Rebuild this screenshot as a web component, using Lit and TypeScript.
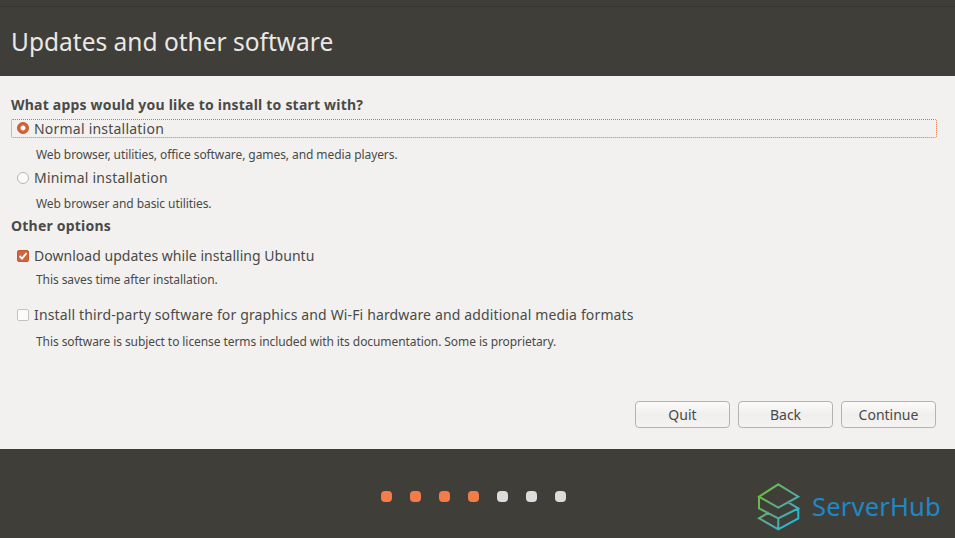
import { LitElement, html, css } from "lit";
import { customElement } from "lit/decorators.js";

@customElement("app-root")
export class AppRoot extends LitElement {
  static styles = css`
    :host { display: block; width: 955px; height: 538px; overflow: hidden; font-family: "Noto Sans", "Open Sans", sans-serif; color: #4a4a48; }
    .page { display: flex; flex-direction: column; height: 538px; }
    .header { height: 76px; box-sizing: border-box; background: #403e39; padding-top: 6px; }
    .header-inner { border-top: 1px solid #373531; height: 70px; box-sizing: border-box; padding: 17px 0 0 11px; }
    h1 { margin: 0; font-size: 24.5px; line-height: 36px; font-weight: 400; color: #e9e8e4; white-space: nowrap; }
    .main { flex: 1; background: #f2f1ef; display: flex; flex-direction: column; padding: 20px 18px 21px 11px; }
    .heading { height: 18px; line-height: 18px; font-size: 14px; font-weight: 700; color: #4a4a48; letter-spacing: 0.21px; white-space: nowrap; }
    .opt { height: 19px; line-height: 19px; font-size: 14px; display: flex; align-items: center; gap: 4px; padding-left: 6px; box-sizing: border-box; white-space: nowrap; }
    .focus { border: 1px dotted #e2703f; border-radius: 2px; padding-left: 5px; margin-top: 5px; }
    .desc { height: 18px; line-height: 18px; font-size: 12px; letter-spacing: -0.08px; padding-left: 25px; white-space: nowrap; }
    .radio { width: 12px; height: 12px; box-sizing: border-box; border-radius: 50%; border: 1px solid #b8b6b2; background: #fbfbfa; flex: none; margin-right: 1px; }
    .radio.on { background: radial-gradient(circle, #fff 0 1.6px, #f3d3c3 2.2px, #d2643a 3px, #cf5f34 6px); border-color: #c9582a; margin-bottom: 1px; }
    .box { width: 12px; height: 12px; box-sizing: border-box; border-radius: 2px; border: 1px solid #c4c2be; background: #fbfbfa; flex: none; margin: 1px 1px 0 0; }
    .box.on { background: #d2633a; border-color: #c25b35; }
    .box svg { width: 10px; height: 10px; display: block; }
    .ls-a { letter-spacing: 0.22px; } .ls-b { letter-spacing: 0.03px; } .ls-c { letter-spacing: 0.14px; }
    .m8 { margin-top: 8px; } .m4 { margin-top: 4px; } .m6 { margin-top: 6px; } .m9 { margin-top: 9px; } .m11 { margin-top: 11px; } .m16 { margin-top: 16px; }
    .buttons { margin-top: auto; display: flex; justify-content: flex-end; gap: 8px; padding-right: 1px; }
    button { width: 95px; height: 27px; padding: 0; border: 1px solid #b5b3af; border-radius: 4px; background: linear-gradient(#fbfbfa, #f0efed 50%, #f4f3f1); font: 14px "Noto Sans", sans-serif; color: #4a4a48; }
    .footer { height: 89px; background: #403e39; position: relative; display: flex; justify-content: center; gap: 18px; padding: 42px 9px 0 0; box-sizing: border-box; }
    .dot { width: 11px; height: 11px; border-radius: 4px; background: #dcdcdb; }
    .dot.on { background: #f47c48; }
    .logo { position: absolute; left: 755px; top: 32px; display: flex; align-items: center; gap: 9px; }
    .logo svg { display: block; }
    .brand { font-size: 25.6px; line-height: 28px; font-weight: 400; letter-spacing: 0.15px; color: #1f88c4; padding-bottom: 3px; }
  `;

  render() {
    return html`<div class="page">
      <div class="header"><div class="header-inner"><h1>Updates and other software</h1></div></div>
      <div class="main">
        <div class="heading">What apps would you like to install to start with?</div>
        <div class="opt focus ls-a"><span class="radio on"></span>Normal installation</div>
        <div class="desc m8">Web browser, utilities, office software, games, and media players.</div>
        <div class="opt m4 ls-a"><span class="radio"></span>Minimal installation</div>
        <div class="desc m8">Web browser and basic utilities.</div>
        <div class="heading m4">Other options</div>
        <div class="opt m11 ls-b"><span class="box on"><svg viewBox="0 0 10 10"><path d="M1.6 5 L4 7.6 L8.6 2" fill="none" stroke="#fff" stroke-width="1.9"/></svg></span>Download updates while installing Ubuntu</div>
        <div class="desc m6">This saves time after installation.</div>
        <div class="opt m16 ls-c"><span class="box"></span>Install third-party software for graphics and Wi-Fi hardware and additional media formats</div>
        <div class="desc m9">This software is subject to license terms included with its documentation. Some is proprietary.</div>
        <div class="buttons"><button>Quit</button><button>Back</button><button>Continue</button></div>
      </div>
      <div class="footer">
        ${[1, 1, 1, 1, 0, 0, 0].map((o) => html`<span class="dot ${o ? "on" : ""}"></span>`)}
        <div class="logo">
          <svg width="48" height="54" viewBox="0 0 48 54">
            <defs><linearGradient id="g" x1="0" y1="0" x2="1" y2="1"><stop offset="0" stop-color="#6cc524"/><stop offset="0.5" stop-color="#5fa795"/><stop offset="1" stop-color="#0cc4ea"/></linearGradient></defs>
            <path d="M23.3 3.3 L43.3 15.7 L23.3 26.7 L4 15.7 Z M4 15.7 V27.3 L23.3 37.3 L43.3 27.3 L33.3 21.3 M43.3 27.3 V37.3 L23.3 48.3 L4 37.3 L14 31.3 M23.3 37.3 V48.3" fill="none" stroke="url(#g)" stroke-width="2"/>
          </svg>
          <span class="brand">ServerHub</span>
        </div>
      </div>
    </div>`;
  }
}
